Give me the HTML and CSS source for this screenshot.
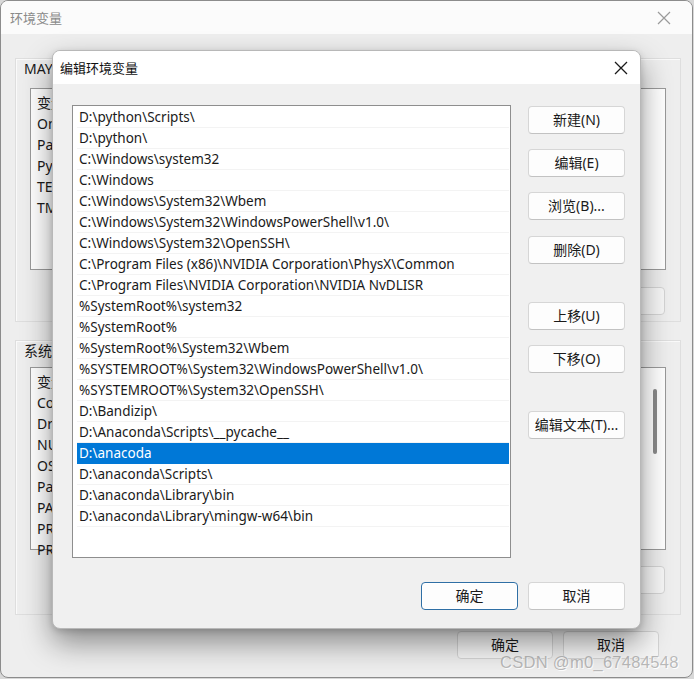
FILE: index.html
```html
<!DOCTYPE html>
<html lang="zh-CN">
<head>
<meta charset="utf-8">
<title>编辑环境变量</title>
<link rel="stylesheet" href="styles.css">
</head>
<body>
<div class="win">
  <div class="win-title">
    <span class="win-title-text">环境变量</span>
    <svg class="win-close" width="14" height="14" viewBox="0 0 14 14"><path d="M1 1L13 13M13 1L1 13" stroke="#9a9a9a" stroke-width="1.2" fill="none"/></svg>
  </div>
  <div class="win-body">
    <div class="group g1">
      <div class="group-label">MAYNARD 的用户变量(U)</div>
      <div class="bg-list l1">
        <div class="bg-row head">变量</div>
        <div class="bg-row">OneDrive</div>
        <div class="bg-row">Path</div>
        <div class="bg-row">PyCharm</div>
        <div class="bg-row">TEMP</div>
        <div class="bg-row">TMP</div>
      </div>
      <div class="bg-btns">
        <div class="bg-btn"></div>
        <div class="bg-btn"></div>
        <div class="bg-btn"></div>
      </div>
    </div>
    <div class="group g2">
      <div class="group-label">系统变量(S)</div>
      <div class="bg-list l2">
        <div class="bg-row head">变量</div>
        <div class="bg-row">ComSpec</div>
        <div class="bg-row">DriverData</div>
        <div class="bg-row">NUMBER_OF_PROCESSORS</div>
        <div class="bg-row">OS</div>
        <div class="bg-row">Path</div>
        <div class="bg-row">PATHEXT</div>
        <div class="bg-row">PROCESSOR_ARCHITECTURE</div>
        <div class="bg-row">PROCESSOR_IDENTIFIER</div>
        <div class="bg-scroll"></div>
      </div>
      <div class="bg-btns">
        <div class="bg-btn"></div>
        <div class="bg-btn"></div>
        <div class="bg-btn"></div>
      </div>
    </div>
    <div class="win-foot">
      <div class="bg-btn foot">确定</div>
      <div class="bg-btn foot">取消</div>
    </div>
  </div>
  <div class="watermark">CSDN @m0_67484548</div>
</div>

<div class="dlg">
  <div class="dlg-title">
    <span class="dlg-title-text">编辑环境变量</span>
    <svg class="dlg-close" width="14" height="14" viewBox="0 0 14 14"><path d="M1 1L13 13M13 1L1 13" stroke="#1a1a1a" stroke-width="1.3" fill="none"/></svg>
  </div>
  <div class="dlg-body">
    <div class="dlg-main">
      <div class="list">
        <div class="row">D:\python\Scripts\</div>
        <div class="row">D:\python\</div>
        <div class="row">C:\Windows\system32</div>
        <div class="row">C:\Windows</div>
        <div class="row">C:\Windows\System32\Wbem</div>
        <div class="row">C:\Windows\System32\WindowsPowerShell\v1.0\</div>
        <div class="row">C:\Windows\System32\OpenSSH\</div>
        <div class="row">C:\Program Files (x86)\NVIDIA Corporation\PhysX\Common</div>
        <div class="row">C:\Program Files\NVIDIA Corporation\NVIDIA NvDLISR</div>
        <div class="row">%SystemRoot%\system32</div>
        <div class="row">%SystemRoot%</div>
        <div class="row">%SystemRoot%\System32\Wbem</div>
        <div class="row">%SYSTEMROOT%\System32\WindowsPowerShell\v1.0\</div>
        <div class="row">%SYSTEMROOT%\System32\OpenSSH\</div>
        <div class="row">D:\Bandizip\</div>
        <div class="row">D:\Anaconda\Scripts\__pycache__</div>
        <div class="row selected">D:\anacoda</div>
        <div class="row">D:\anaconda\Scripts\</div>
        <div class="row">D:\anaconda\Library\bin</div>
        <div class="row">D:\anaconda\Library\mingw-w64\bin</div>
      </div>
      <div class="side">
        <div class="btn b-new">新建(N)</div>
        <div class="btn b-std">编辑(E)</div>
        <div class="btn b-std">浏览(B)...</div>
        <div class="btn b-del">删除(D)</div>
        <div class="btn b-far">上移(U)</div>
        <div class="btn b-std">下移(O)</div>
        <div class="btn b-far">编辑文本(T)...</div>
      </div>
    </div>
    <div class="dlg-foot">
      <div class="btn focus">确定</div>
      <div class="btn">取消</div>
    </div>
  </div>
</div>
</body>
</html>
```

FILE: styles.css
```css
* { box-sizing: border-box; }
html, body { margin: 0; padding: 0; }
body {
  position: relative;
  width: 694px;
  height: 679px;
  background: #d8d8d8;
  font-family: "Noto Sans", "Noto Sans CJK SC", sans-serif;
  font-size: 14px;
  color: #1a1a1a;
  overflow: hidden;
}

/* background window */
.win {
  position: relative;
  width: 693px;
  height: 678px;
  border: 1px solid #8c8c8c;
  border-radius: 8px;
  background: #eeeeee;
  overflow: hidden;
}
.win-title {
  height: 33px;
  background: #fbfbfb;
  display: flex;
  align-items: center;
  justify-content: space-between;
  padding: 0 21px 0 9px;
}
.win-title-text { font-size: 13px; color: #8a8a8a; }
.group {
  margin-left: 14px;
  width: 666px;
  border: 1px solid #dedede;
  box-shadow: inset 1px 1px 0 #fafafa;
}
.g1 { margin-top: 24px; height: 264px; }
.g2 { margin-top: 18px; height: 275px; }
.group-label {
  padding-left: 8px;
  height: 20px;
  line-height: 20px;
  font-size: 14px;
  white-space: nowrap;
}
.bg-list {
  position: relative;
  margin-left: 14px;
  width: 636px;
  background: #fff;
  border: 1px solid #9a9a9a;
  padding: 3px 0 0 6px;
}
.l1 { margin-top: 9px; height: 182px; }
.l2 { margin-top: 6px; height: 183px; }
.bg-row {
  height: 21px;
  line-height: 21px;
  white-space: nowrap;
}
.bg-scroll {
  position: absolute;
  right: 8px;
  top: 21px;
  width: 4px;
  height: 65px;
  background: #8a8a8a;
  border-radius: 2px;
}
.bg-btns {
  display: flex;
  justify-content: flex-end;
  gap: 10px;
  padding-right: 15px;
}
.g1 .bg-btns { margin-top: 17px; }
.g2 .bg-btns { margin-top: 16px; }
.bg-btn {
  width: 95px;
  height: 28px;
  line-height: 26px;
  text-align: center;
  background: #f6f6f6;
  border: 1px solid #d4d4d4;
  border-radius: 4px;
  font-size: 14px;
}
.win-foot {
  display: flex;
  justify-content: flex-end;
  gap: 10px;
  padding-right: 33px;
  margin-top: 16px;
}
.bg-btn.foot { width: 96px; }
.watermark {
  position: absolute;
  left: 499px;
  top: 652px;
  font-family: "Liberation Sans", "DejaVu Sans", sans-serif;
  font-size: 16.5px;
  color: #b9b9b9;
  text-shadow: 0 0 1px #fff, 1px 1px 0 #fff;
  letter-spacing: 0.3px;
}

/* foreground dialog */
.dlg {
  position: absolute;
  left: 52px;
  top: 50px;
  width: 589px;
  height: 579px;
  border-radius: 8px;
  border: 1px solid #b8b8b8;
  background: #f0f0f0;
  box-shadow: 0 14px 30px rgba(0, 0, 0, 0.42), 0 2px 6px rgba(0, 0, 0, 0.15);
  overflow: hidden;
}
.dlg-title {
  height: 33px;
  background: #ffffff;
  display: flex;
  align-items: center;
  justify-content: space-between;
  padding: 0 12px 0 7px;
}
.dlg-title-text { font-size: 13px; color: #111; }
.dlg-body { padding: 21px 15px 0 19px; }
.dlg-main { display: flex; gap: 17px; }
.list {
  width: 440px;
  height: 453px;
  background: #fff;
  border: 1px solid #8e8e8e;
  padding: 1px 1px 0 4px;
}
.row {
  height: 21px;
  line-height: 21px;
  padding-left: 2px;
  border-bottom: 1px solid #f3f3f3;
  white-space: nowrap;
  overflow: hidden;
  font-size: 13.5px;
  color: #1a1a1a;
}
.row.selected { background: #0078d7; color: #fff; border-bottom-color: #0078d7; }
.side { display: flex; flex-direction: column; width: 97px; }
.btn {
  width: 97px;
  height: 28px;
  line-height: 26px;
  text-align: center;
  background: #fdfdfd;
  border: 1px solid #d6d6d6;
  border-bottom-color: #c2c2c2;
  border-radius: 4px;
  font-size: 14px;
  color: #1a1a1a;
  white-space: nowrap;
}
.b-new { margin-top: 1px; }
.b-std { margin-top: 15px; }
.b-del { margin-top: 16px; }
.b-far { margin-top: 38px; }
.dlg-foot {
  display: flex;
  justify-content: flex-end;
  gap: 10px;
  margin-top: 24px;
}
.btn.focus { border: 1px solid #2f6fa5; box-shadow: inset 0 0 0 1px #ffffff; }
```
